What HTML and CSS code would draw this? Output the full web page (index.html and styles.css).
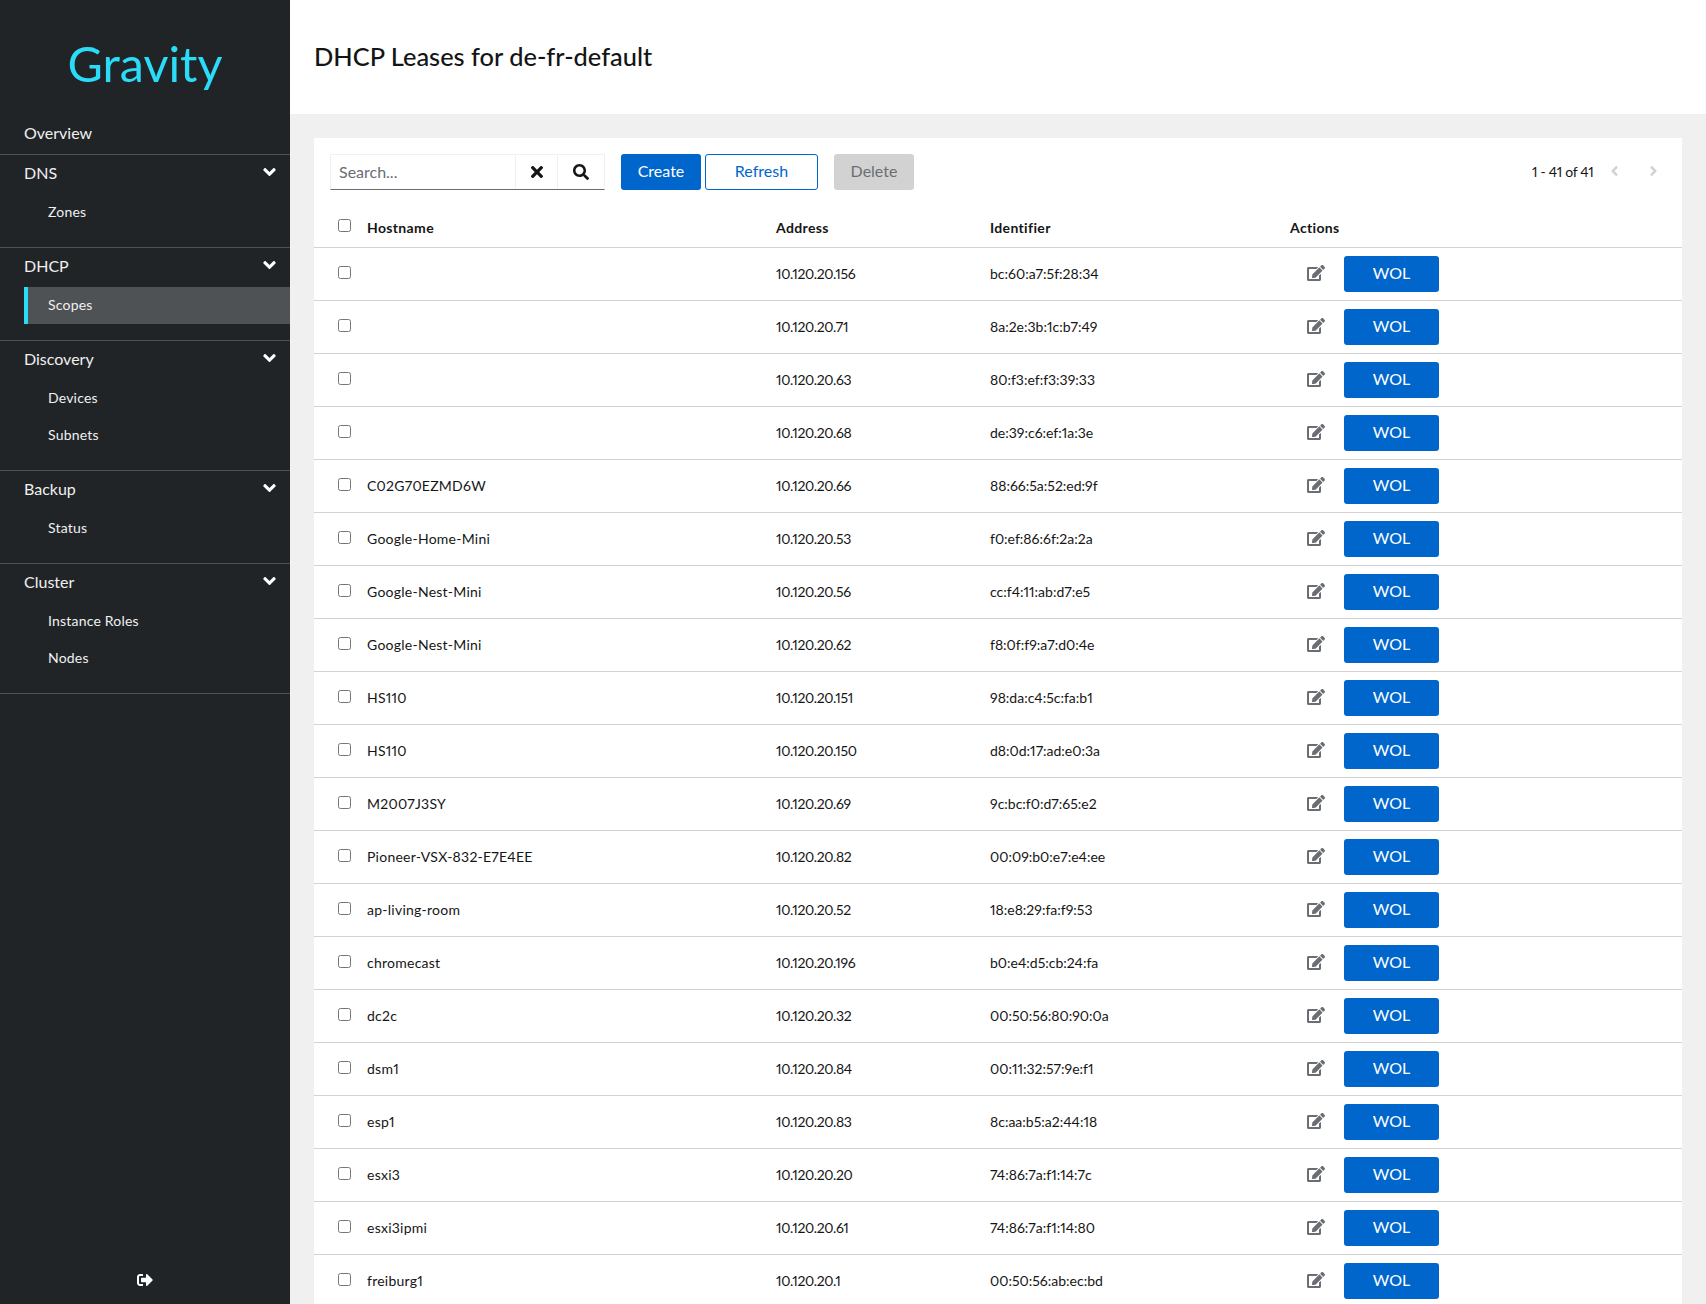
FILE: index.html
```html
<!DOCTYPE html>
<html lang="en">
<head>
<meta charset="utf-8">
<title>DHCP Leases</title>
<link rel="stylesheet" href="styles.css">
</head>
<body>
<svg class="defs" aria-hidden="true">
  <symbol id="i-down" viewBox="0 0 320 512"><path d="M143 352.3L7 216.3c-9.4-9.4-9.4-24.6 0-33.9l22.6-22.6c9.4-9.4 24.6-9.4 33.9 0l96.4 96.4 96.4-96.4c9.4-9.4 24.6-9.4 33.9 0l22.6 22.6c9.4 9.4 9.4 24.6 0 33.9l-136 136c-9.2 9.4-24.4 9.4-33.8 0z"/></symbol>
  <symbol id="i-left" viewBox="0 0 256 512"><path d="M31.7 239l136-136c9.4-9.4 24.6-9.4 33.9 0l22.6 22.6c9.4 9.4 9.4 24.6 0 33.9L127.9 256l96.4 96.4c9.4 9.4 9.4 24.6 0 33.9L201.7 409c-9.4 9.4-24.6 9.4-33.9 0l-136-136c-9.5-9.4-9.5-24.6-.1-34z"/></symbol>
  <symbol id="i-right" viewBox="0 0 256 512"><path d="M224.3 273l-136 136c-9.4 9.4-24.6 9.4-33.9 0l-22.6-22.6c-9.4-9.4-9.4-24.6 0-33.9l96.4-96.4-96.4-96.4c-9.4-9.4-9.4-24.6 0-33.9L54.3 103c9.4-9.4 24.6-9.4 33.9 0l136 136c9.5 9.4 9.5 24.6.1 34z"/></symbol>
  <symbol id="i-times" viewBox="0 0 352 512"><path d="M242.72 256l100.07-100.07c12.28-12.28 12.28-32.19 0-44.48l-22.24-22.24c-12.28-12.28-32.19-12.28-44.48 0L176 189.28 75.93 89.21c-12.28-12.28-32.19-12.28-44.48 0L9.21 111.45c-12.28 12.28-12.28 32.19 0 44.48L109.28 256 9.21 356.07c-12.28 12.28-12.28 32.19 0 44.48l22.24 22.24c12.28 12.28 32.2 12.28 44.48 0L176 322.72l100.07 100.07c12.28 12.28 32.2 12.28 44.48 0l22.24-22.24c12.28-12.28 12.28-32.19 0-44.48L242.72 256z"/></symbol>
  <symbol id="i-search" viewBox="0 0 512 512"><path d="M505 442.7L405.3 343c-4.5-4.5-10.6-7-17-7H372c27.6-35.3 44-79.7 44-128C416 93.1 322.9 0 208 0S0 93.1 0 208s93.1 208 208 208c48.3 0 92.7-16.4 128-44v16.3c0 6.4 2.5 12.5 7 17l99.7 99.7c9.4 9.4 24.6 9.4 33.9 0l28.3-28.3c9.4-9.4 9.4-24.6.1-34zM208 336c-70.7 0-128-57.2-128-128 0-70.7 57.2-128 128-128 70.7 0 128 57.2 128 128 0 70.7-57.2 128-128 128z"/></symbol>
  <symbol id="i-edit" viewBox="0 0 576 512"><path d="M402.6 83.2l90.2 90.2c3.8 3.8 3.8 10 0 13.8L274.4 405.6l-92.8 10.3c-12.4 1.4-22.9-9.1-21.5-21.5l10.3-92.8L388.8 83.2c3.8-3.8 10-3.8 13.8 0zm162-22.9l-48.8-48.8c-15.2-15.2-39.9-15.2-55.2 0l-35.4 35.4c-3.8 3.8-3.8 10 0 13.8l90.2 90.2c3.8 3.8 10 3.8 13.8 0l35.4-35.4c15.2-15.3 15.2-40 0-55.2zM384 346.2V448H64V128h229.8c3.2 0 6.2-1.3 8.5-3.5l40-40c7.6-7.6 2.2-20.5-8.5-20.5H48C21.5 64 0 85.5 0 112v352c0 26.5 21.5 48 48 48h352c26.5 0 48-21.5 48-48V306.2c0-10.7-12.9-16-20.5-8.5l-40 40c-2.2 2.3-3.5 5.3-3.5 8.5z"/></symbol>
  <symbol id="i-logout" viewBox="0 0 512 512"><path d="M497 273L329 441c-15 15-41 4.5-41-17v-96H152c-13.3 0-24-10.7-24-24v-96c0-13.3 10.7-24 24-24h136V88c0-21.4 25.9-32 41-17l168 168c9.3 9.4 9.3 24.6 0 34zM192 436v-40c0-6.6-5.4-12-12-12H96c-17.7 0-32-14.3-32-32V160c0-17.7 14.3-32 32-32h84c6.6 0 12-5.4 12-12V76c0-6.6-5.4-12-12-12H96c-53 0-96 43-96 96v192c0 53 43 96 96 96h84c6.6 0 12-5.4 12-12z"/></symbol>
</svg>
<div class="app">
  <aside class="sidebar">
    <div class="brand">Gravity</div>
    <nav class="nav">
      <a class="nav-top" href="#">Overview</a>
      <section class="group">
        <div class="group-title"><span>DNS</span><svg class="chev"><use href="#i-down"/></svg></div>
        <a class="nav-item" href="#">Zones</a>
      </section>
      <section class="group">
        <div class="group-title"><span>DHCP</span><svg class="chev"><use href="#i-down"/></svg></div>
        <a class="nav-item active" href="#">Scopes</a>
      </section>
      <section class="group">
        <div class="group-title"><span>Discovery</span><svg class="chev"><use href="#i-down"/></svg></div>
        <a class="nav-item" href="#">Devices</a>
        <a class="nav-item" href="#">Subnets</a>
      </section>
      <section class="group">
        <div class="group-title"><span>Backup</span><svg class="chev"><use href="#i-down"/></svg></div>
        <a class="nav-item" href="#">Status</a>
      </section>
      <section class="group">
        <div class="group-title"><span>Cluster</span><svg class="chev"><use href="#i-down"/></svg></div>
        <a class="nav-item" href="#">Instance Roles</a>
        <a class="nav-item" href="#">Nodes</a>
      </section>
    </nav>
    <div class="side-foot"><svg class="logout"><use href="#i-logout"/></svg></div>
  </aside>
  <main class="main">
    <header class="page-head"><h1>DHCP Leases for de-fr-default</h1></header>
    <div class="page-body">
      <div class="card">
        <div class="toolbar">
          <div class="search">
            <input class="search-input" type="text" placeholder="Search...">
            <button class="search-btn"><svg class="ic-times"><use href="#i-times"/></svg></button>
            <button class="search-btn"><svg class="ic-search"><use href="#i-search"/></svg></button>
          </div>
          <button class="btn primary">Create</button>
          <button class="btn secondary">Refresh</button>
          <button class="btn disabled">Delete</button>
          <div class="pager">
            <span class="pager-text">1 - 41 of 41</span>
            <svg class="caret first"><use href="#i-left"/></svg>
            <svg class="caret"><use href="#i-right"/></svg>
          </div>
        </div>
        <div class="table">
          <div class="row head"><div><input class="check" type="checkbox"></div><div>Hostname</div><div>Address</div><div>Identifier</div><div>Actions</div></div>
          <div class="row"><div><input class="check" type="checkbox"></div><div></div><div>10.120.20.156</div><div>bc:60:a7:5f:28:34</div><div class="actions"><svg class="edit"><use href="#i-edit"/></svg><button class="wol">WOL</button></div></div>
          <div class="row"><div><input class="check" type="checkbox"></div><div></div><div>10.120.20.71</div><div>8a:2e:3b:1c:b7:49</div><div class="actions"><svg class="edit"><use href="#i-edit"/></svg><button class="wol">WOL</button></div></div>
          <div class="row"><div><input class="check" type="checkbox"></div><div></div><div>10.120.20.63</div><div>80:f3:ef:f3:39:33</div><div class="actions"><svg class="edit"><use href="#i-edit"/></svg><button class="wol">WOL</button></div></div>
          <div class="row"><div><input class="check" type="checkbox"></div><div></div><div>10.120.20.68</div><div>de:39:c6:ef:1a:3e</div><div class="actions"><svg class="edit"><use href="#i-edit"/></svg><button class="wol">WOL</button></div></div>
          <div class="row"><div><input class="check" type="checkbox"></div><div>C02G70EZMD6W</div><div>10.120.20.66</div><div>88:66:5a:52:ed:9f</div><div class="actions"><svg class="edit"><use href="#i-edit"/></svg><button class="wol">WOL</button></div></div>
          <div class="row"><div><input class="check" type="checkbox"></div><div>Google-Home-Mini</div><div>10.120.20.53</div><div>f0:ef:86:6f:2a:2a</div><div class="actions"><svg class="edit"><use href="#i-edit"/></svg><button class="wol">WOL</button></div></div>
          <div class="row"><div><input class="check" type="checkbox"></div><div>Google-Nest-Mini</div><div>10.120.20.56</div><div>cc:f4:11:ab:d7:e5</div><div class="actions"><svg class="edit"><use href="#i-edit"/></svg><button class="wol">WOL</button></div></div>
          <div class="row"><div><input class="check" type="checkbox"></div><div>Google-Nest-Mini</div><div>10.120.20.62</div><div>f8:0f:f9:a7:d0:4e</div><div class="actions"><svg class="edit"><use href="#i-edit"/></svg><button class="wol">WOL</button></div></div>
          <div class="row"><div><input class="check" type="checkbox"></div><div>HS110</div><div>10.120.20.151</div><div>98:da:c4:5c:fa:b1</div><div class="actions"><svg class="edit"><use href="#i-edit"/></svg><button class="wol">WOL</button></div></div>
          <div class="row"><div><input class="check" type="checkbox"></div><div>HS110</div><div>10.120.20.150</div><div>d8:0d:17:ad:e0:3a</div><div class="actions"><svg class="edit"><use href="#i-edit"/></svg><button class="wol">WOL</button></div></div>
          <div class="row"><div><input class="check" type="checkbox"></div><div>M2007J3SY</div><div>10.120.20.69</div><div>9c:bc:f0:d7:65:e2</div><div class="actions"><svg class="edit"><use href="#i-edit"/></svg><button class="wol">WOL</button></div></div>
          <div class="row"><div><input class="check" type="checkbox"></div><div>Pioneer-VSX-832-E7E4EE</div><div>10.120.20.82</div><div>00:09:b0:e7:e4:ee</div><div class="actions"><svg class="edit"><use href="#i-edit"/></svg><button class="wol">WOL</button></div></div>
          <div class="row"><div><input class="check" type="checkbox"></div><div>ap-living-room</div><div>10.120.20.52</div><div>18:e8:29:fa:f9:53</div><div class="actions"><svg class="edit"><use href="#i-edit"/></svg><button class="wol">WOL</button></div></div>
          <div class="row"><div><input class="check" type="checkbox"></div><div>chromecast</div><div>10.120.20.196</div><div>b0:e4:d5:cb:24:fa</div><div class="actions"><svg class="edit"><use href="#i-edit"/></svg><button class="wol">WOL</button></div></div>
          <div class="row"><div><input class="check" type="checkbox"></div><div>dc2c</div><div>10.120.20.32</div><div>00:50:56:80:90:0a</div><div class="actions"><svg class="edit"><use href="#i-edit"/></svg><button class="wol">WOL</button></div></div>
          <div class="row"><div><input class="check" type="checkbox"></div><div>dsm1</div><div>10.120.20.84</div><div>00:11:32:57:9e:f1</div><div class="actions"><svg class="edit"><use href="#i-edit"/></svg><button class="wol">WOL</button></div></div>
          <div class="row"><div><input class="check" type="checkbox"></div><div>esp1</div><div>10.120.20.83</div><div>8c:aa:b5:a2:44:18</div><div class="actions"><svg class="edit"><use href="#i-edit"/></svg><button class="wol">WOL</button></div></div>
          <div class="row"><div><input class="check" type="checkbox"></div><div>esxi3</div><div>10.120.20.20</div><div>74:86:7a:f1:14:7c</div><div class="actions"><svg class="edit"><use href="#i-edit"/></svg><button class="wol">WOL</button></div></div>
          <div class="row"><div><input class="check" type="checkbox"></div><div>esxi3ipmi</div><div>10.120.20.61</div><div>74:86:7a:f1:14:80</div><div class="actions"><svg class="edit"><use href="#i-edit"/></svg><button class="wol">WOL</button></div></div>
          <div class="row"><div><input class="check" type="checkbox"></div><div>freiburg1</div><div>10.120.20.1</div><div>00:50:56:ab:ec:bd</div><div class="actions"><svg class="edit"><use href="#i-edit"/></svg><button class="wol">WOL</button></div></div>
        </div>
      </div>
    </div>
  </main>
</div>
</body>
</html>
```
FILE: styles.css
```css
* { box-sizing: border-box; }
html, body { margin: 0; height: 100%; overflow: hidden; }
body {
  font-family: "Lato", "Noto Sans", sans-serif;
  font-feature-settings: "pnum";
  font-size: 14px;
  color: #151515;
  background: #f0f0f0;
}
.defs { display: none; }
.app { display: flex; height: 100vh; }

.sidebar {
  width: 290px;
  flex: none;
  display: flex;
  flex-direction: column;
  background: #212427;
  color: #f0f0f0;
}
.brand {
  height: 114px;
  padding-top: 31px;
  text-align: center;
  color: #2bdcf9;
  font-size: 48.5px;
  line-height: 64px;
}
.nav { flex: 1; display: flex; flex-direction: column; }
.nav a { color: inherit; text-decoration: none; display: block; }
.nav-top {
  height: 41px;
  padding: 0 24px;
  font-size: 16px;
  line-height: 38px;
  border-bottom: 1px solid #4f5255;
}
.group { padding-bottom: 16px; border-bottom: 1px solid #4f5255; }
.group-title {
  height: 39px;
  padding: 0 14px 5px 24px;
  display: flex;
  align-items: center;
  justify-content: space-between;
  font-size: 16px;
}
.chev { width: 13px; height: 20px; fill: #fff; margin-top: 0; }
.nav-item {
  height: 37px;
  margin-left: 24px;
  padding-left: 24px;
  line-height: 35px;
  font-size: 14px;
  letter-spacing: 0.2px;
}
.nav-item.active {
  background: #4f5255;
  border-left: 4px solid #2bdcf9;
  padding-left: 20px;
}
.side-foot { height: 32px; display: flex; justify-content: center; }
.logout { width: 16px; height: 16px; fill: #fff; }

.main { flex: 1; min-width: 0; height: 100vh; overflow: hidden; display: flex; flex-direction: column; }
.page-head {
  flex: none;
  height: 114px;
  padding: 38px 24px 0;
  background: #fff;
}
.page-head h1 {
  margin: 0;
  font-size: 25.4px;
  font-weight: 500;
  line-height: 36px;
}
.page-body { padding: 24px; }
.card { background: #fff; }
.toolbar {
  display: flex;
  align-items: flex-start;
  padding: 16px 16px 0;
  height: 52px;
}
.search {
  display: flex;
  width: 275px;
  height: 36px;
  border: 1px solid #f0f0f0;
  border-bottom-color: #6a6e73;
  margin-right: 16px;
}
.search-input {
  flex: 1;
  min-width: 0;
  border: 0;
  outline: 0;
  padding: 0 8px 2px;
  font: inherit;
  font-size: 16px;
  color: #151515;
}
.search-input::placeholder { color: #6a6e73; opacity: 1; }
.search-btn {
  width: 42px;
  padding: 0;
  border: 0;
  border-left: 1px solid #f0f0f0;
  background: #fff;
  display: flex;
  align-items: center;
  justify-content: center;
}
.search-btn + .search-btn { width: 47px; }
.ic-times { width: 12px; height: 18px; fill: #151515; }
.ic-search { width: 16px; height: 16px; fill: #151515; }
.btn {
  height: 36px;
  padding: 0 0 4px;
  border: 0;
  border-radius: 3px;
  font: inherit;
  font-size: 16px;
}
.btn.primary { width: 80px; background: #06c; color: #fff; margin-right: 4px; }
.btn.secondary { width: 113px; background: #fff; color: #06c; border: 1px solid #06c; margin-right: 16px; }
.btn.disabled { width: 80px; background: #d2d2d2; color: #6a6e73; }
.pager { margin-left: auto; display: flex; align-items: center; height: 34px; }
.pager-text { width: 78px; font-size: 14px; letter-spacing: -0.3px; }
.caret { width: 9px; height: 16px; fill: #d2d2d2; margin-left: 30px; margin-right: 8px; }
.caret.first { margin-left: 0; margin-right: 0; }

.row {
  display: grid;
  grid-template-columns: 53px 409px 214px 300px 1fr;
  align-items: center;
  height: 53px;
  border-bottom: 1px solid #d2d2d2;
}
.row > div { padding-bottom: 2px; }
.row > div:nth-child(2) { letter-spacing: 0.25px; }
.row > div:nth-child(3) { letter-spacing: -0.35px; }
.row > .actions { padding-bottom: 0; }
.row.head {
  height: 58px;
  padding-top: 19px;
  font-weight: 700;
}
.row.head > div { letter-spacing: 0.35px; }
.check {
  display: block;
  width: 13px;
  height: 13px;
  margin: 0 0 1px 24px;
}
.head .check { margin-bottom: 3px; }
.actions { display: flex; align-items: center; padding-left: 17px; }
.edit { width: 18px; height: 16px; fill: #6a6e73; margin: 0 19px 2px 0; }
.wol {
  width: 95px;
  height: 36px;
  padding: 0 0 4px;
  border: 0;
  border-radius: 3px;
  background: #06c;
  color: #fff;
  font: inherit;
  font-size: 16px;
}
```
